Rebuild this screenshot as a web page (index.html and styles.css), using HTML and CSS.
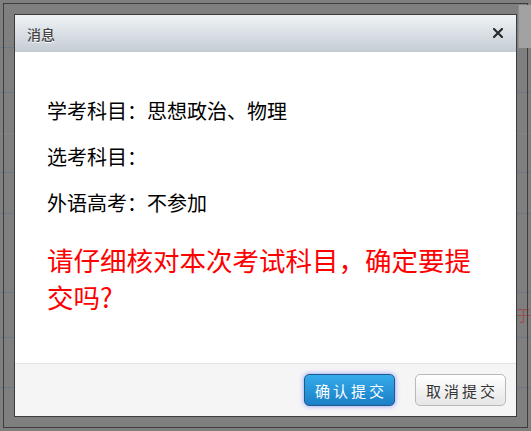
FILE: index.html
```html
<!DOCTYPE html>
<html lang="zh-CN">
<head>
    <meta charset="UTF-8">
    <meta name="viewport" content="width=device-width, initial-scale=1.0">
    <title>消息</title>
    <link rel="stylesheet" href="styles.css">
</head>
<body>
    <div class="page">
        <div class="row" style="height: 48px;"></div>
        <div class="row" style="height: 45px;"></div>
        <div class="row row-light" style="height: 41px;"></div>
        <div class="row" style="height: 39px;"></div>
        <div class="row" style="height: 41px;"></div>
        <div class="row" style="height: 79px;"></div>
        <div class="row row-note" style="height: 45px;">于</div>
        <div class="row" style="height: 50px;"></div>
    </div>
    <div class="scroll-thumb"></div>

    <div class="dialog-frame">
        <div class="dialog">
            <div class="dialog-title">
                <span class="title-text">消息</span>
                <span class="close-btn">
                    <svg width="10" height="10" viewBox="0 0 10 10">
                        <path d="M1 1 L9 9 M9 1 L1 9" stroke="#2b2b2b" stroke-width="2.2" stroke-linecap="square"/>
                    </svg>
                </span>
            </div>
            <div class="dialog-body">
                <div class="info-line">学考科目：思想政治、物理</div>
                <div class="info-line">选考科目：</div>
                <div class="info-line">外语高考：不参加</div>
                <div class="warning">请仔细核对本次考试科目，确定要提交吗?</div>
            </div>
            <div class="dialog-footer">
                <button class="button button-primary">确认提交</button>
                <button class="button">取消提交</button>
            </div>
        </div>
    </div>
</body>
</html>
```

FILE: styles.css
```css
body {
    margin: 0;
    width: 531px;
    height: 431px;
    overflow: hidden;
    background-color: #7f7f7f;
    font-family: "Noto Sans CJK SC", "Noto Sans", sans-serif;
    position: relative;
}
.page {
    display: flex;
    flex-direction: column;
}
.row {
    box-sizing: border-box;
    border-bottom: 1px solid #6c7784;
}
.row-light {
    border-bottom-color: #868686;
}
.row-note {
    padding-left: 516px;
    font-size: 15px;
    line-height: 44px;
    color: #9c4f4f;
}
.scroll-thumb {
    position: absolute;
    top: 5px;
    right: 0;
    width: 12px;
    height: 43px;
    background-color: #a2a2a2;
    border-left: 1px solid #8c8c8c;
    z-index: 2;
}
.dialog-frame {
    position: absolute;
    left: 3px;
    top: 3px;
    width: 525px;
    height: 425px;
    box-sizing: border-box;
    padding: 10px;
    border: 1px solid #3d3d3d;
}
.dialog {
    height: 100%;
    box-sizing: border-box;
    border: 1px solid #3c3c3c;
    background-color: #ffffff;
    display: flex;
    flex-direction: column;
}
.dialog-title {
    height: 37px;
    flex-shrink: 0;
    display: flex;
    align-items: center;
    justify-content: space-between;
    padding: 0 13px 0 12px;
    background: linear-gradient(#eff3f6, #c4ccd3);
}
.title-text {
    font-size: 14px;
    font-weight: 500;
    color: #444444;
    text-shadow: 0 1px 0 #ffffff;
}
.close-btn {
    display: flex;
    margin-top: -1px;
}
.dialog-body {
    flex: 1;
    padding: 36px 32px 0;
}
.info-line {
    font-size: 20px;
    line-height: 46px;
    color: #000000;
}
.warning {
    margin-top: 15px;
    font-size: 26.5px;
    line-height: 37px;
    color: #ff0000;
}
.dialog-footer {
    height: 52px;
    flex-shrink: 0;
    border-top: 1px solid #e2e2e2;
    background-color: #f5f5f5;
    display: flex;
    justify-content: flex-end;
    align-items: center;
    gap: 20px;
    padding-right: 10px;
}
.button {
    width: 91px;
    height: 32px;
    padding: 0 0 0 3px;
    font-family: "Noto Sans CJK SC", sans-serif;
    font-size: 15px;
    letter-spacing: 3px;
    color: #333333;
    background: linear-gradient(#ffffff, #e6e6e6);
    border: 1px solid #b9b9b9;
    border-radius: 5px;
    cursor: pointer;
}
.button-primary {
    color: #ffffff;
    background: linear-gradient(#35acec, #1b7fc6);
    border-color: #1f5a8c;
    box-shadow: 0 0 5px rgba(90, 110, 255, 0.7);
}
```
